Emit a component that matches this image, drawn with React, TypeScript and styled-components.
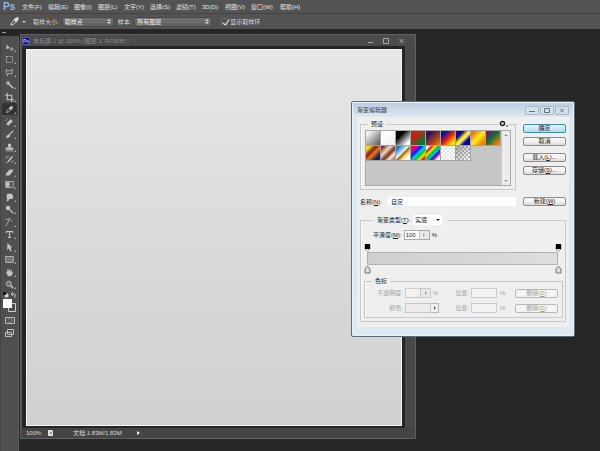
import React from "react";
import styled, { createGlobalStyle, css } from "styled-components";

const Global = createGlobalStyle`
  * { box-sizing: border-box; }
  html, body { margin: 0; height: 100%; }
  body, button, input, select {
    font-family: "Liberation Sans", "Noto Sans CJK SC", sans-serif;
    font-size: 6px;
    line-height: 8px;
  }
  button, input, select { margin: 0; padding: 0; border: 0; background: none; color: inherit; appearance: none; }
`;

const App_ = styled.div`
  display: flex;
  flex-direction: column;
  height: 100vh;
  overflow: hidden;
  position: relative;
  background: #262626;
  color: #dcdcdc;
`;

/* ---------- Top bars ---------- */
const MenuBar = styled.nav`
  display: flex;
  align-items: center;
  height: 13px;
  padding-left: 3px;
  background: #535353;
  flex: none;
`;
const Logo = styled.span`
  width: 19px;
  color: #8fb8ea;
  font-size: 10px;
  line-height: 12px;
  font-weight: bold;
`;
const MenuItem = styled.button<{ $w: number }>`
  width: ${(p) => p.$w}px;
  text-align: left;
  white-space: nowrap;
  color: #e6e6e6;
`;
const OptionsBar = styled.div`
  display: flex;
  align-items: center;
  height: 16px;
  padding-left: 9px;
  background: #535353;
  border-top: 1px solid #444;
  flex: none;
`;
const Caret = styled.span`
  width: 0;
  margin: 0 7px 0 2px;
  border: 2px solid transparent;
  border-top-color: #d0d0d0;
  border-bottom: 0;
`;
const OptLabel = styled.label`
  white-space: nowrap;
  margin-right: 3px;
`;
const OptField = styled.div<{ $w: number; $gap: number }>`
  display: flex;
  align-items: center;
  width: ${(p) => p.$w}px;
  height: 10px;
  margin-right: ${(p) => p.$gap}px;
  padding-right: 2px;
  background: linear-gradient(#707070, #626262);
  border: 1px solid #4a4a4a;
  border-radius: 1px;
`;
const OptSelect = styled.select`
  flex: 1;
  min-width: 0;
  height: 8px;
  padding-left: 2px;
  color: #f2f2f2;
  option { color: #222; }
`;
const CheckLabel = styled.label`
  display: flex;
  align-items: center;
  gap: 2px;
  white-space: nowrap;
`;
const Check = styled.input`
  width: 7px;
  height: 7px;
  position: relative;
  border: 1px solid #666;
  &:checked::after {
    content: "";
    position: absolute;
    left: 2px;
    top: -1px;
    width: 3px;
    height: 6px;
    border: solid #eee;
    border-width: 0 1px 1px 0;
    transform: rotate(35deg);
  }
`;

/* ---------- Workspace ---------- */
const Workspace = styled.main`
  flex: 1;
  min-height: 0;
  display: flex;
`;
const Toolbox = styled.aside`
  width: 19px;
  flex: none;
  padding-top: 7px;
  background: #262626;
  position: relative;
  &::before {
    content: "";
    position: absolute;
    left: 2px;
    top: 3px;
    width: 4px;
    height: 1px;
    background: #a0a0a0;
  }
`;
const ToolPanel = styled.div`
  height: 100%;
  background: #4f4f4f;
  border-left: 1px solid #444;
  border-right: 1px solid #5d5d5d;
  padding-top: 5px;
`;
const Tool = styled.button<{ $on?: boolean }>`
  display: flex;
  align-items: center;
  justify-content: center;
  width: 15px;
  height: 12px;
  margin-left: 1px;
  color: #c4c4c4;
  position: relative;
  border-radius: 1px;
  ${(p) => p.$on && css`background: #333;`}
  &:nth-child(2n) { margin-bottom: 1px; }
  &::after {
    content: "";
    position: absolute;
    right: 1px;
    bottom: 1px;
    border: 1px solid;
    border-color: transparent #a8a8a8 #a8a8a8 transparent;
  }
`;
const ToolExtras = styled.div`
  display: grid;
  justify-items: center;
  width: 17px;
  color: #bdbdbd;
`;
const ExtraButton = styled.button`
  display: block;
  height: 13px;
`;
const Glyph = styled.svg`
  display: block;
  flex: none;
  fill: none;
  stroke: currentColor;
`;

const DocWindow = styled.section`
  display: flex;
  flex-direction: column;
  width: 66%;
  margin: 5px 0 12px 1px;
  border: 1px solid #606060;
  background: #484848;
`;
const DocTitle = styled.header`
  display: flex;
  align-items: center;
  height: 11px;
  flex: none;
  padding: 0 11px 0 1px;
  background: #4b4b4b;
  color: #8c8c8c;
`;
const DocBadge = styled.span`
  width: 8px;
  height: 8px;
  margin-right: 3px;
  background: #121264;
  border: 1px solid #5555a5;
  color: #b0b0ff;
  font-size: 5px;
  line-height: 6px;
  font-weight: bold;
  text-align: center;
`;
const DocName = styled.span`
  flex: 1;
  white-space: nowrap;
`;
const DocControls = styled.div`
  display: flex;
  gap: 10px;
  color: #a8a8a8;
`;
const DocBody = styled.div`
  flex: 1;
  display: flex;
  min-height: 0;
  margin-right: 10px;
  border-left: 1px solid #5a5a5a;
  padding: 3px 3px 2px 4px;
  background: #252525;
`;
const Canvas = styled.div`
  flex: 1;
  border: 1px solid #f4f4f4;
  background: linear-gradient(#e6e6e6, #d0d0d0);
`;
const StatusBar = styled.footer`
  display: flex;
  align-items: center;
  height: 10px;
  flex: none;
  padding-left: 5px;
  background: #444;
  white-space: nowrap;
`;
const Zoom = styled.span`
  width: 22px;
  line-height: 8px;
`;
const StatusText = styled.span`
  margin-left: 20px;
  flex: none;
  width: 64px;
`;
const Play = styled.span`
  border: 2px solid transparent;
  border-left: 3px solid #eee;
  border-right: 0;
`;

/* ---------- Dialog ---------- */
const Dialog = styled.div`
  position: absolute;
  top: 101px;
  right: 25px;
  width: 224px;
  padding: 0 5px 9px 5px;
  border: 1px solid #5d6d78;
  border-radius: 2px;
  background: linear-gradient(#bccddf, #dde7f0 15px, #e0eaf1);
  box-shadow: inset 0 0 0 1px #eaf3f9;
  color: #1c1c1c;
`;
const DialogTitle = styled.header`
  display: flex;
  align-items: center;
  justify-content: space-between;
  height: 15px;
  color: #39424a;
`;
const WinButtons = styled.div`
  display: flex;
  gap: 1px;
  align-self: flex-start;
  margin-top: 4px;
`;
const WinButton = styled.button`
  display: grid;
  place-items: center;
  width: 14px;
  height: 9px;
  border: 1px solid #a9b8c6;
  border-radius: 1px;
  background: #d5e1ec;
  color: #66727d;
`;
const DialogBody = styled.div`
  padding: 3px 3px 5px;
  background: #efefef;
`;
const TopRow = styled.div`
  display: flex;
  gap: 7px;
`;
const Left = styled.div`
  flex: 1;
  min-width: 0;
`;
const Side = styled.div`
  display: flex;
  flex-direction: column;
  width: 43px;
  padding-top: 4px;
`;
const PushButton = styled.button<{ $primary?: boolean; $mt?: number }>`
  width: 43px;
  height: 9px;
  margin-top: ${(p) => p.$mt ?? 0}px;
  line-height: 7px;
  border: 1px solid #8c8c8c;
  border-radius: 2px;
  background: linear-gradient(#f5f5f5 45%, #dadada);
  text-align: center;
  white-space: nowrap;
  ${(p) => p.$primary && css`border-color: #3c8fa8; background: linear-gradient(#e4f4f8, #b5dbe5);`}
  &:disabled { color: #9b9b9b; border-color: #b8b8b8; background: #f4f4f4; }
`;
const Group = styled.fieldset`
  position: relative;
  margin: 0;
  min-width: 0;
  border: 1px solid #c9c9c9;
  box-shadow: inset 1px 0 #fafafa;
`;
const PresetGroup = styled(Group)`
  padding: 2px 4px 3px;
`;
const PresetLegend = styled.legend`
  margin-left: 3px;
  padding: 0 3px;
`;
const GearButton = styled.button`
  position: absolute;
  top: -8px;
  right: 6px;
  width: 10px;
  height: 8px;
  background: #efefef;
  color: #222;
`;
const PresetBox = styled.div`
  display: flex;
  justify-content: space-between;
  height: 56px;
  border: 1px solid #a9a9a9;
  background: #c6c6c6;
`;
const Swatches = styled.div`
  display: grid;
  grid-template-columns: repeat(9, 15px);
  grid-auto-rows: 15px;
`;
const Swatch = styled.button<{ $fill: string }>`
  border: solid #a3a3a3;
  border-width: 0 1px 1px 0;
  background: ${(p) => p.$fill};
`;
const ScrollBar = styled.div`
  display: flex;
  flex-direction: column;
  justify-content: space-between;
  align-items: center;
  width: 8px;
  padding: 3px 0;
  background: #ececec;
`;
const Arrow = styled.span<{ $dir: "up" | "down" | "right"; $c?: string }>`
  flex: none;
  border: 2px solid transparent;
  ${(p) => p.$dir === "up" && css`border-top: 0; border-bottom-color: ${p.$c ?? "#9a9a9a"};`}
  ${(p) => p.$dir === "down" && css`border-bottom: 0; border-top-color: ${p.$c ?? "#9a9a9a"};`}
  ${(p) => p.$dir === "right" && css`border-right: 0; border-left-color: ${p.$c ?? "#9a9a9a"};`}
`;
const Updown = styled.span`
  display: grid;
  gap: 1px;
`;
const NameRow = styled.div`
  display: flex;
  align-items: center;
  margin: 7px 0 9px;
`;
const NameLabel = styled.label`
  width: 28px;
`;
const NameInput = styled.input`
  flex: 1;
  min-width: 0;
  height: 9px;
  margin-right: 7px;
  padding-left: 3px;
  background: #fff;
`;
const TypeGroup = styled(Group)`
  padding: 5px 2px 3px 3px;
`;
const TypeLegend = styled.legend`
  display: flex;
  align-items: center;
  gap: 3px;
  margin-left: 9px;
  padding: 0 5px 0 4px;
`;
const TypeSelectBox = styled.span`
  display: flex;
  align-items: center;
  width: 29px;
  height: 10px;
  padding-right: 2px;
  background: #fff;
`;
const TypeSelect = styled.select`
  flex: 1;
  min-width: 0;
  height: 8px;
  padding-left: 2px;
`;
const SmoothRow = styled.div`
  display: flex;
  align-items: center;
  gap: 2px;
  margin-left: 9px;
`;
const NumBox = styled.span<{ $off?: boolean }>`
  display: flex;
  align-items: center;
  width: 26px;
  height: 10px;
  border: 1px solid ${(p) => (p.$off ? "#cbcbcb" : "#aaa")};
  background: ${(p) => (p.$off ? "#f2f2f2" : "#fff")};
`;
const NumInput = styled.input`
  flex: 1;
  min-width: 0;
  width: 10px;
  height: 8px;
  padding-left: 1px;
`;
const Spin = styled.button`
  display: grid;
  place-items: center;
  width: 10px;
  height: 8px;
  border-left: 1px solid #c4c4c4;
  background: #e9e9e9;
`;
const Ramp = styled.div`
  margin: 3px 1px 3px 0;
`;
const Stops = styled.div`
  display: flex;
  justify-content: space-between;
`;
const StopButton = styled.button`
  width: 7px;
  height: 9px;
`;
const RampBar = styled.div`
  height: 13px;
  margin: 0 4px 0 3px;
  border: 1px solid #b2b2b2;
  background: linear-gradient(90deg, #cfcfcf, #dedede);
`;
const StopGroup = styled(Group)`
  padding: 3px 4px 4px;
  color: #a2a2a2;
`;
const StopLegend = styled.legend`
  margin-left: 3px;
  padding: 0 3px;
  color: #1c1c1c;
`;
const StopRow = styled.div`
  display: grid;
  grid-template-columns: 36px 35px 15px 16px 27px 1fr 43px;
  align-items: center;
  height: 10px;
  & + & { margin-top: 5px; }
`;
const Right = styled.label`
  text-align: right;
  padding-right: 2px;
  white-space: nowrap;
`;
const Unit = styled.span`
  padding-left: 2px;
`;
const ValueCell = styled.div`
  display: flex;
  align-items: center;
`;
const ColorWell = styled.button`
  width: 26px;
  height: 10px;
  border: 1px solid #c6c6c6;
  background: #ececec;
`;
const ColorMenu = styled.button`
  display: grid;
  place-items: center;
  width: 8px;
  height: 10px;
  border: 1px solid #b8b8b8;
  border-left: 0;
`;

const menus: [string, number][] = [
  ["文件(F)", 26], ["编辑(E)", 26], ["图像(I)", 24], ["图层(L)", 26], ["文字(Y)", 26],
  ["选择(S)", 26], ["滤镜(T)", 26], ["3D(D)", 23], ["视图(V)", 26], ["窗口(W)", 29], ["帮助(H)", 26],
];

const tools: [string, React.ReactNode][] = [
  ["移动", <><path d="M2 2v7l2-2 3 0z" fill="currentColor" stroke="none" /><path d="M9 5v6M6 8h6" /></>],
  ["选框", <rect x="2" y="2" width="8" height="8" strokeDasharray="2 1" />],
  ["套索", <path d="M2 2l3 2 5-2-1 6-4-1-2 2-1-3zM4 8l-1 3" />],
  ["魔棒", <><path d="M5 5l6 6" strokeWidth="2" /><path d="M4 1v6M1 4h6M2 2l4 4M6 2L2 6" /></>],
  ["裁剪", <path d="M3 0v9h9M0 3h9v9" strokeWidth="1.5" />],
  ["吸管", <><path d="M2 10l1-3 3-3 2 2-3 3z" /><path d="M6 3l3 3M8 4l2-2" strokeWidth="3" /></>],
  ["修复", <><path d="M3 9l6-6" strokeWidth="4" /><path d="M1 4q0-3 3-3" strokeDasharray="1 1" /></>],
  ["画笔", <><path d="M5 7l6-6" strokeWidth="1.5" /><path d="M5 6L3 7l-2 4 4-1 2-2z" fill="currentColor" stroke="none" /></>],
  ["图章", <path d="M4 1h4v3L7 6h4v3H1V6h4L4 4zM1 10h10v1H1z" fill="currentColor" stroke="none" />],
  ["历史画笔", <><path d="M4 9l6-7" strokeWidth="2" /><path d="M1 5q0-3 4-3M8 10q3 0 3-3M1 11l3-2" /></>],
  ["橡皮", <path d="M1 8l5-6h5l-1 3-4 5H1z" fill="currentColor" stroke="none" />],
  ["渐变", <><rect x="1" y="2" width="10" height="8" /><path d="M2 3h3v6H2z" fill="currentColor" /><path d="M6 3v6" opacity=".5" strokeWidth="2" /></>],
  ["涂抹", <path d="M3 1h6l2 3-1 4-4 0-2 3-2 0 1-4-1-2z" fill="currentColor" stroke="none" />],
  ["减淡", <><circle cx="4" cy="4" r="3" fill="currentColor" stroke="none" /><path d="M6 6l5 5" strokeWidth="1.5" /></>],
  ["钢笔", <path d="M1 2l5-1 4 4M6 1L4 6l-3 5" />],
  ["文字", <path d="M2 4V2h8v2M6 2v8M4 10h4" strokeWidth="1.5" />],
  ["路径选择", <path d="M3 0v10l2-3 2 4 2-1-2-4 3 0z" fill="currentColor" stroke="none" />],
  ["矩形", <rect x="1" y="2" width="10" height="8" fill="#777" />],
  ["抓手", <path d="M1 5l2 1V2h1l1 3V1h1l1 4 1-3 1 1v3l2-1-2 5-2 1H4z" fill="currentColor" stroke="none" />],
  ["缩放", <><circle cx="5" cy="5" r="3.5" fill="#777" /><path d="M7 7l4 4" strokeWidth="2" /></>],
];

const check = "repeating-conic-gradient(#bbb 0 25%, #fff 0 50%) 0 0 / 4px 4px";
const presets: [string, string][] = [
  ["前景到背景", "linear-gradient(135deg,#f4f4f4 15%,#555)"],
  ["前景到透明", `linear-gradient(135deg,#fff 35%,#ffffff80), ${check}`],
  ["黑白", "linear-gradient(135deg,#000 30%,#fff 85%)"],
  ["红绿", "linear-gradient(135deg,#d01818 25%,#874018 50%,#087830 80%)"],
  ["紫橙", "linear-gradient(135deg,#32105c 20%,#a8401c 65%,#ff8200)"],
  ["蓝红黄", "linear-gradient(135deg,#0712a0 20%,#e21b12 50%,#ffdd00 85%)"],
  ["蓝黄蓝", "linear-gradient(135deg,#080893 27%,#ffe700 46%,#fff07a 56%,#080893 73%)"],
  ["橙黄橙", "linear-gradient(135deg,#f57900 15%,#ffee22 50%,#f57900 85%)"],
  ["紫绿橙", "linear-gradient(135deg,#632178 15%,#126d36 45%,#ff7b00 90%)"],
  ["黄紫橙蓝", "linear-gradient(135deg,#ffe000 15%,#7b1b25 37%,#f47713 55%,#15225f 80%)"],
  ["铜色", "linear-gradient(135deg,#77331c 10%,#f7d5c4 35%,#72301b 58%,#fae5da 75%,#a05b3c)"],
  ["铬黄", "linear-gradient(135deg,#1b82c5 15%,#e6f6ff 45%,#9b630c 54%,#f5d160 66%,#fff 82%)"],
  ["色谱", "linear-gradient(135deg,#e71212 10%,#c700d5 24%,#001de8 38%,#00cfed 52%,#02c332 64%,#f1eb00 77%,#ef1d00 90%)"],
  ["透明彩虹", `linear-gradient(135deg,#fff 12%,#e21111 22%,#fff000 34%,#00be36 46%,#05c7f0 56%,#1428ce 66%,#da1395 76%,#fff 86%)`],
  ["透明条纹", `linear-gradient(#ffffff99,#ffffff99), ${check}`],
  ["中灰密度", `linear-gradient(135deg,#7779,#fff0), ${check}`],
];

const Access = ({ t, k }: { t: string; k: string }) => <>{t}(<u>{k}</u>):</>;

const OpacityStop = ({ name }: { name: string }) => (
  <StopButton aria-label={name}>
    <Glyph width="7" height="9" viewBox="0 0 7 9"><path d="M1 2h5v4L3.5 8 1 6z" fill="#fff" stroke="#888" /><path d="M1 1h5v5H1z" fill="#000" stroke="none" /></Glyph>
  </StopButton>
);
const ColorStop = ({ name }: { name: string }) => (
  <StopButton aria-label={name}>
    <Glyph width="7" height="9" viewBox="0 0 7 9"><path d="M3.5 1L6 4v4H1V4z" fill="#ddd" stroke="#777" /></Glyph>
  </StopButton>
);

export default function App() {
  return (
    <App_>
      <Global />
      <MenuBar>
        <Logo>Ps</Logo>
        {menus.map(([m, w]) => <MenuItem key={m} $w={w}>{m}</MenuItem>)}
      </MenuBar>
      <OptionsBar>
        <Glyph width="11" height="11" viewBox="0 0 12 12">{tools[5][1]}</Glyph>
        <Caret />
        <OptLabel htmlFor="size">取样大小:</OptLabel>
        <OptField $w={52} $gap={4}>
          <OptSelect id="size"><option>取样点</option></OptSelect>
          <Updown><Arrow $dir="up" $c="#ddd" /><Arrow $dir="down" $c="#ddd" /></Updown>
        </OptField>
        <OptLabel htmlFor="sample">样本:</OptLabel>
        <OptField $w={78} $gap={9}>
          <OptSelect id="sample"><option>所有图层</option></OptSelect>
          <Updown><Arrow $dir="up" $c="#ddd" /><Arrow $dir="down" $c="#ddd" /></Updown>
        </OptField>
        <CheckLabel><Check type="checkbox" defaultChecked />显示取样环</CheckLabel>
      </OptionsBar>

      <Workspace>
        <Toolbox>
          <ToolPanel>
            {tools.map(([name, art], i) => (
              <Tool key={name} aria-label={name} $on={i === 5}>
                <Glyph width="9" height="9" viewBox="0 0 12 12">{art}</Glyph>
              </Tool>
            ))}
            <ToolExtras>
              <Glyph width="15" height="23" viewBox="0 0 15 23">
                <path d="M3 3h3v3H3z" fill="#ddd" /><path d="M1 1h3v3H1z" fill="#111" stroke="none" />
                <path d="M9 3h4v4M11 1L9 3l2 2" />
                <path d="M6.500 12.500h7v8h-7z" fill="#4f4f4f" stroke="#ccc" />
                <path d="M1 8h9v9H1z" fill="#fff" stroke="none" />
              </Glyph>
              <ExtraButton aria-label="快速蒙版">
                <Glyph width="10" height="9" viewBox="0 0 10 9"><path d="M.5 1.500h9v6h-9z" /><circle cx="5" cy="4.500" r="2" strokeDasharray="1 1" /></Glyph>
              </ExtraButton>
              <ExtraButton aria-label="屏幕模式">
                <Glyph width="10" height="9" viewBox="0 0 10 9"><path d="M2.500 .5h6v5h-6zM.5 3.500h6v4h-6z" /></Glyph>
              </ExtraButton>
            </ToolExtras>
          </ToolPanel>
        </Toolbox>

        <DocWindow>
          <DocTitle>
            <DocBadge>Ps</DocBadge>
            <DocName>未标题-1 @ 100% (图层 1, RGB/8) *</DocName>
            <DocControls>
              <Glyph width="5" height="6" viewBox="0 0 5 6"><path d="M0 4.500h5" /></Glyph>
              <Glyph width="6" height="6" viewBox="0 0 6 6"><path d="M.5 .5h5v5h-5z" /></Glyph>
              <Glyph width="5" height="6" viewBox="0 0 5 6"><path d="M.5 1l4 4M4.500 1l-4 4" /></Glyph>
            </DocControls>
          </DocTitle>
          <DocBody><Canvas /></DocBody>
          <StatusBar>
            <Zoom>100%</Zoom>
            <Glyph width="5" height="6" viewBox="0 0 5 6"><path d="M0 0h4l1 1v5H0z" fill="#ddd" stroke="none" /><path d="M2 3h2" stroke="#555" /></Glyph>
            <StatusText>文档:1.83M/1.83M</StatusText>
            <Play />
          </StatusBar>
        </DocWindow>
      </Workspace>

      <Dialog role="dialog" aria-label="渐变编辑器">
        <DialogTitle>
          <span>渐变编辑器</span>
          <WinButtons>
            <WinButton aria-label="最小化"><Glyph width="6" height="5" viewBox="0 0 6 5"><path d="M0 3.500h6" /></Glyph></WinButton>
            <WinButton aria-label="最大化"><Glyph width="6" height="5" viewBox="0 0 6 5"><path d="M.5 .5h5v4h-5z" /></Glyph></WinButton>
            <WinButton aria-label="关闭"><Glyph width="6" height="5" viewBox="0 0 6 5"><path d="M1 .5l4 4M5 .5l-4 4" /></Glyph></WinButton>
          </WinButtons>
        </DialogTitle>
        <DialogBody>
          <TopRow>
            <Left>
              <PresetGroup>
                <PresetLegend>预设</PresetLegend>
                <GearButton aria-label="预设菜单">
                  <Glyph width="10" height="8" viewBox="0 0 10 8"><circle cx="3.500" cy="3.500" r="2" strokeWidth="1.500" /><path d="M7 6h2" /></Glyph>
                </GearButton>
                <PresetBox>
                  <Swatches>{presets.map(([n, f]) => <Swatch key={n} aria-label={n} $fill={f} />)}</Swatches>
                  <ScrollBar><Arrow $dir="up" /><Arrow $dir="down" /></ScrollBar>
                </PresetBox>
              </PresetGroup>
            </Left>
            <Side>
              <PushButton $primary>确定</PushButton>
              <PushButton $mt={4}>取消</PushButton>
              <PushButton $mt={7}>载入(<u>L</u>)...</PushButton>
              <PushButton $mt={4}>存储(<u>S</u>)...</PushButton>
            </Side>
          </TopRow>
          <NameRow>
            <NameLabel htmlFor="name"><Access t="名称" k="N" /></NameLabel>
            <NameInput id="name" defaultValue="自定" />
            <PushButton>新建(<u>W</u>)</PushButton>
          </NameRow>
          <TypeGroup>
            <TypeLegend>
              <label htmlFor="type"><Access t="渐变类型" k="T" /></label>
              <TypeSelectBox>
                <TypeSelect id="type"><option>实底</option></TypeSelect>
                <Arrow $dir="down" $c="#222" />
              </TypeSelectBox>
            </TypeLegend>
            <SmoothRow>
              <label htmlFor="smooth"><Access t="平滑度" k="M" /></label>
              <NumBox>
                <NumInput id="smooth" defaultValue="100" />
                <Spin aria-label="调整平滑度"><Arrow $dir="right" /></Spin>
              </NumBox>
              <span>%</span>
            </SmoothRow>
            <Ramp>
              <Stops><OpacityStop name="起点不透明度" /><OpacityStop name="终点不透明度" /></Stops>
              <RampBar />
              <Stops><ColorStop name="起点颜色" /><ColorStop name="终点颜色" /></Stops>
            </Ramp>
            <StopGroup>
              <StopLegend>色标</StopLegend>
              <StopRow>
                <Right htmlFor="opacity">不透明度:</Right>
                <ValueCell>
                  <NumBox $off>
                    <NumInput id="opacity" disabled />
                    <Spin disabled aria-label="调整不透明度"><Arrow $dir="right" /></Spin>
                  </NumBox>
                  <Unit>%</Unit>
                </ValueCell>
                <span />
                <Right htmlFor="pos1">位置:</Right>
                <NumBox $off><NumInput id="pos1" disabled /></NumBox>
                <Unit>%</Unit>
                <PushButton disabled>删除(<u>D</u>)</PushButton>
              </StopRow>
              <StopRow>
                <Right htmlFor="color">颜色:</Right>
                <ValueCell>
                  <ColorWell id="color" disabled />
                  <ColorMenu disabled aria-label="颜色菜单"><Arrow $dir="right" $c="#666" /></ColorMenu>
                </ValueCell>
                <span />
                <Right htmlFor="pos2">位置:</Right>
                <NumBox $off><NumInput id="pos2" disabled /></NumBox>
                <Unit>%</Unit>
                <PushButton disabled>删除(<u>D</u>)</PushButton>
              </StopRow>
            </StopGroup>
          </TypeGroup>
        </DialogBody>
      </Dialog>
    </App_>
  );
}
